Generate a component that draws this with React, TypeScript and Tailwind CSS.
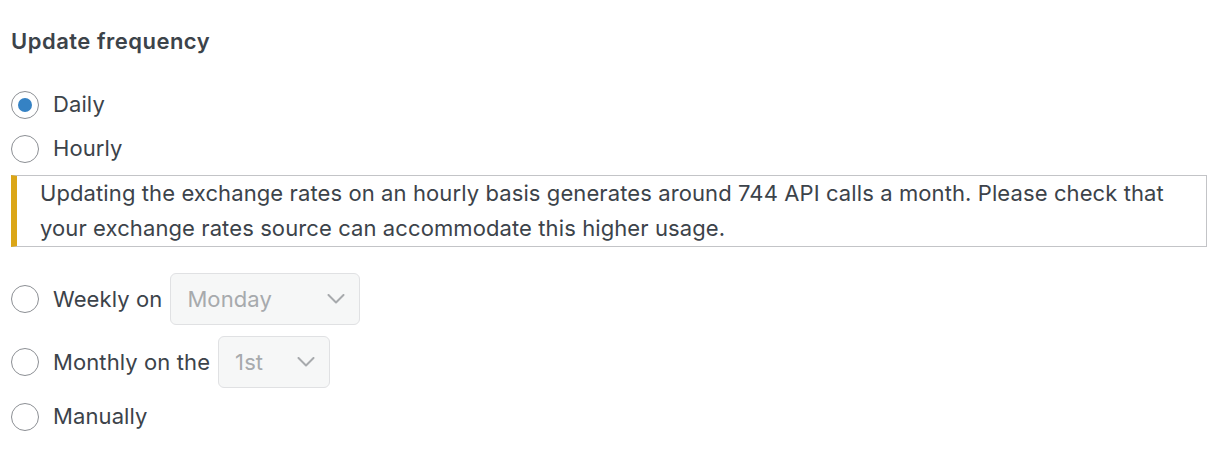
interface RadioProps {
  checked?: boolean;
  children: React.ReactNode;
}

function Radio({ checked, children }: RadioProps) {
  return (
    <label className="flex items-center gap-[14px]">
      <span className="flex h-[28px] w-[28px] shrink-0 items-center justify-center rounded-full border border-[#8c8f94] bg-white">
        {checked && <span className="h-[14px] w-[14px] rounded-full bg-[#3582c4]" />}
      </span>
      {children}
    </label>
  );
}

function Select({ value, width }: { value: string; width: string }) {
  return (
    <span
      className={`ml-[8px] flex h-[52px] items-center justify-between rounded-[6px] border border-[#e0e1e3] bg-[#f6f7f7] pl-[16px] pr-[14px] text-[#a7aaad] ${width}`}
    >
      {value}
      <svg width="18" height="10" viewBox="0 0 18 10" fill="none" stroke="#a7aaad" strokeWidth="2" strokeLinecap="round" strokeLinejoin="round">
        <polyline points="1.5,1 9,8.5 16.5,1" />
      </svg>
    </span>
  );
}

export default function App() {
  return (
    <div className="min-h-screen bg-white pl-[11px] pr-[16px] font-['Inter',sans-serif] text-[22px] tracking-[0.1px] text-[#3c434a]">
      <h2 className="pt-[27px] text-[22px] font-semibold leading-[28px] tracking-[0.5px]">Update frequency</h2>
      <div className="mt-[33px] flex flex-col">
        <div className="h-[28px]">
          <Radio checked>Daily</Radio>
        </div>
        <div className="mt-[16px] h-[28px]">
          <Radio>Hourly</Radio>
        </div>
        <div className="mt-[15px] border border-l-[6px] border-[#c3c4c7] border-l-[#dba617] pl-[23px] pr-[10px] leading-[35px]">
          Updating the exchange rates on an hourly basis generates around 744 API calls a month. Please check that
          your exchange rates source can accommodate this higher usage.
        </div>
        <div className="mt-[26px] flex items-center">
          <Radio>Weekly on</Radio>
          <Select value="Monday" width="w-[190px]" />
        </div>
        <div className="mt-[11px] flex items-center">
          <Radio>Monthly on the</Radio>
          <Select value="1st" width="w-[112px]" />
        </div>
        <div className="mt-[12px] h-[28px]">
          <Radio>Manually</Radio>
        </div>
      </div>
    </div>
  );
}
